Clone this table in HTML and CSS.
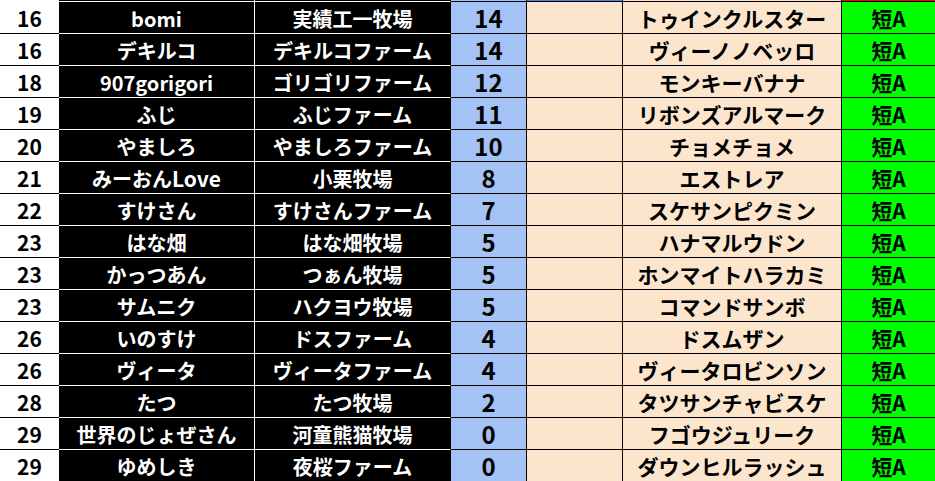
FILE: index.html
```html
<!DOCTYPE html>
<html lang="ja">
<head>
<meta charset="utf-8">
<title>Ranking</title>
<link rel="stylesheet" href="styles.css">
</head>
<body>
<div class="sheet">
  <div class="row strip">
    <div class="c rank"></div><div class="c owner"></div><div class="c farm"></div><div class="c pts"></div><div class="c blank sel"></div><div class="c horse"></div><div class="c grade red"></div>
  </div>
  <div class="row first"><div class="c rank">16</div><div class="c owner">bomi</div><div class="c farm">実績工一牧場</div><div class="c pts">14</div><div class="c blank"></div><div class="c horse">トゥインクルスター</div><div class="c grade">短A</div></div>
  <div class="row"><div class="c rank">16</div><div class="c owner">デキルコ</div><div class="c farm">デキルコファーム</div><div class="c pts">14</div><div class="c blank"></div><div class="c horse">ヴィーノノベッロ</div><div class="c grade">短A</div></div>
  <div class="row"><div class="c rank">18</div><div class="c owner">907gorigori</div><div class="c farm">ゴリゴリファーム</div><div class="c pts">12</div><div class="c blank"></div><div class="c horse">モンキーバナナ</div><div class="c grade">短A</div></div>
  <div class="row"><div class="c rank">19</div><div class="c owner">ふじ</div><div class="c farm">ふじファーム</div><div class="c pts">11</div><div class="c blank"></div><div class="c horse">リボンズアルマーク</div><div class="c grade">短A</div></div>
  <div class="row"><div class="c rank">20</div><div class="c owner">やましろ</div><div class="c farm">やましろファーム</div><div class="c pts">10</div><div class="c blank"></div><div class="c horse">チョメチョメ</div><div class="c grade">短A</div></div>
  <div class="row"><div class="c rank">21</div><div class="c owner">みーおん<span class="lat">Love</span></div><div class="c farm">小栗牧場</div><div class="c pts">8</div><div class="c blank"></div><div class="c horse">エストレア</div><div class="c grade">短A</div></div>
  <div class="row"><div class="c rank">22</div><div class="c owner">すけさん</div><div class="c farm">すけさんファーム</div><div class="c pts">7</div><div class="c blank"></div><div class="c horse">スケサンピクミン</div><div class="c grade">短A</div></div>
  <div class="row"><div class="c rank">23</div><div class="c owner">はな畑</div><div class="c farm">はな畑牧場</div><div class="c pts">5</div><div class="c blank"></div><div class="c horse">ハナマルウドン</div><div class="c grade">短A</div></div>
  <div class="row"><div class="c rank">23</div><div class="c owner">かっつあん</div><div class="c farm">つぁん牧場</div><div class="c pts">5</div><div class="c blank"></div><div class="c horse">ホンマイトハラカミ</div><div class="c grade">短A</div></div>
  <div class="row"><div class="c rank">23</div><div class="c owner">サムニク</div><div class="c farm">ハクヨウ牧場</div><div class="c pts">5</div><div class="c blank"></div><div class="c horse">コマンドサンボ</div><div class="c grade">短A</div></div>
  <div class="row"><div class="c rank">26</div><div class="c owner">いのすけ</div><div class="c farm">ドスファーム</div><div class="c pts">4</div><div class="c blank"></div><div class="c horse">ドスムザン</div><div class="c grade">短A</div></div>
  <div class="row"><div class="c rank">26</div><div class="c owner">ヴィータ</div><div class="c farm">ヴィータファーム</div><div class="c pts">4</div><div class="c blank"></div><div class="c horse">ヴィータロビンソン</div><div class="c grade">短A</div></div>
  <div class="row"><div class="c rank">28</div><div class="c owner">たつ</div><div class="c farm">たつ牧場</div><div class="c pts">2</div><div class="c blank"></div><div class="c horse">タツサンチャビスケ</div><div class="c grade">短A</div></div>
  <div class="row"><div class="c rank">29</div><div class="c owner">世界のじょぜさん</div><div class="c farm">河童熊猫牧場</div><div class="c pts">0</div><div class="c blank"></div><div class="c horse">フゴウジュリーク</div><div class="c grade">短A</div></div>
  <div class="row"><div class="c rank">29</div><div class="c owner">ゆめしき</div><div class="c farm">夜桜ファーム</div><div class="c pts">0</div><div class="c blank"></div><div class="c horse">ダウンヒルラッシュ</div><div class="c grade">短A</div></div>
</div>
</body>
</html>
```

FILE: styles.css
```css
html, body {
  margin: 0;
  padding: 0;
  background: #ffffff;
}
body {
  width: 935px;
  height: 481px;
  overflow: hidden;
  font-family: "Noto Sans CJK JP", "Noto Sans", sans-serif;
  font-weight: 700;
  font-size: 21px;
}
.sheet {
  display: flex;
  flex-direction: column;
}
.row {
  display: grid;
  grid-template-columns: 59px 196px 196px 76px 96px 219px 93px;
  height: 32px;
}
.row.strip {
  height: 1px;
}
.c {
  box-sizing: border-box;
  display: flex;
  align-items: center;
  justify-content: center;
  border-top: 1px solid #000;
  white-space: nowrap;
  line-height: 1;
  padding-top: 2px;
}
.strip .c {
  border-top: 0;
  padding: 0;
}
.rank {
  background: #fff;
  color: #000;
}
.first .rank {
  border-top-color: #fff;
}
.owner {
  background: #000;
  color: #fff;
  font-size: 20px;
  border-top-color: #fff;
  border-right: 1px solid #fff;
}
.owner .lat {
  font-size: 21px;
}
.farm {
  background: #000;
  color: #fff;
  font-size: 20px;
  border-top-color: #fff;
  border-right: 1px solid #000;
}
.pts {
  background: #a4c2f4;
  color: #000;
  font-size: 24px;
  padding-top: 0;
  border-right: 1px solid #000;
}
.blank {
  background: #fce5cd;
  border-right: 1px solid #000;
}
.horse {
  background: #fce5cd;
  color: #000;
  border-right: 1px solid #000;
}
.grade {
  background: #00ff00;
  color: #000;
}
.strip .sel {
  background: #4a86e8;
}
.strip .red {
  background: #ff0000;
}
```
